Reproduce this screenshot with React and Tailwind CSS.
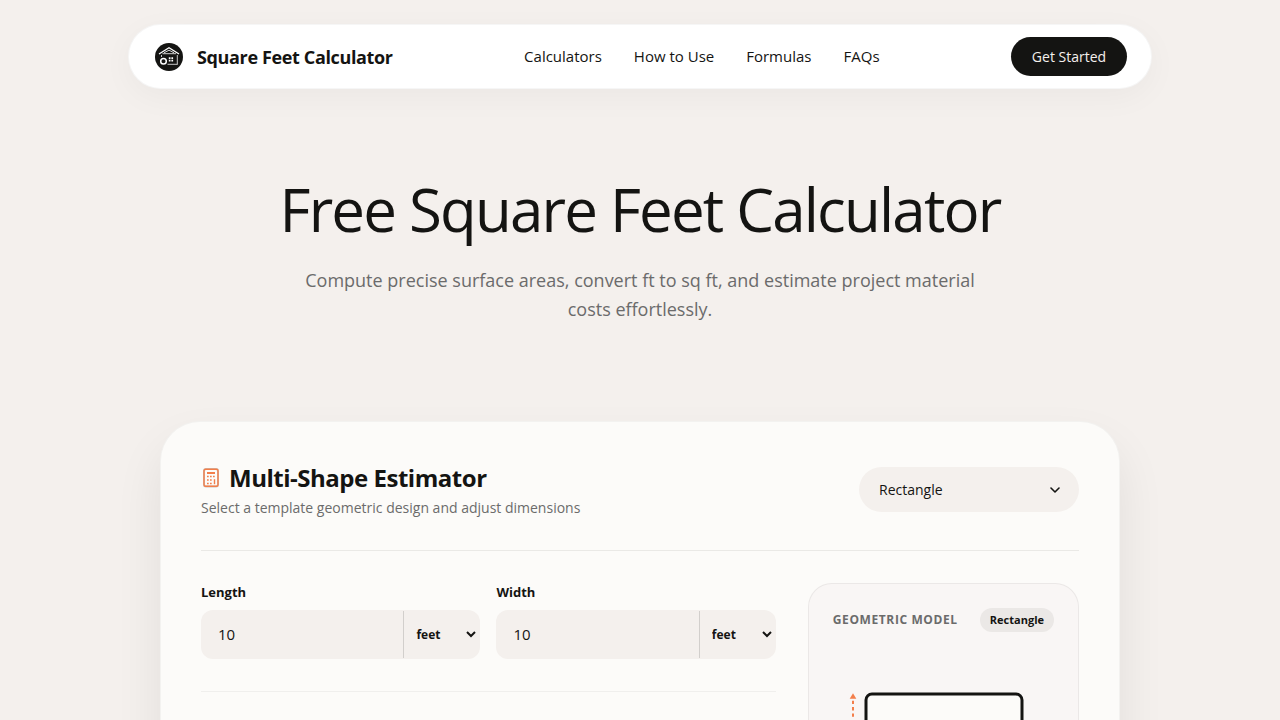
import { useState } from 'react';

const NAV_LINKS = ['Calculators', 'How to Use', 'Formulas', 'FAQs'];
const UNITS = ['feet', 'inches', 'yards', 'meters'];
const SHAPES = ['Rectangle', 'Circle', 'Triangle', 'Trapezoid'];

export default function App() {
  const [shape, setShape] = useState('Rectangle');

  return (
    <div className="h-screen overflow-hidden bg-[#f4f0ed] pt-6 font-['Open_Sans','Noto_Sans',sans-serif] text-[#141412]">
      <Navbar />

      {/* Hero */}
      <section className="mt-[86px] text-center">
        <h1 className="text-[60px] leading-[68px] tracking-[-1.8px]">Free Square Feet Calculator</h1>
        <p className="mx-auto mt-[23px] w-[700px] text-[18px] leading-[28.8px] text-[#6b6b6b]">
          Compute precise surface areas, convert ft to sq ft, and estimate project material costs effortlessly.
        </p>
      </section>

      {/* Calculator card */}
      <main className="mx-auto mt-[97px] h-[700px] w-[960px] rounded-[40px] border border-[#141412]/4 bg-[#fcfbf9] p-10 shadow-[0_24px_48px_rgba(20,20,19,0.08)]">
        <div className="flex h-[89px] items-start justify-between border-b border-[#141412]/8">
          <div>
            <h2 className="flex items-center gap-2 text-[24px] leading-[32px] font-bold tracking-[-0.48px]">
              <CalculatorIcon />
              Multi-Shape Estimator
            </h2>
            <p className="mt-[3px] text-[14px] leading-[22px] text-[#6b6b6b]">
              Select a template geometric design and adjust dimensions
            </p>
          </div>
          <div className="relative mt-[5px]">
            <select
              value={shape}
              onChange={e => setShape(e.target.value)}
              className="h-[45px] w-[220px] appearance-none rounded-full bg-[#f4f0ed] px-5 text-[14px]"
            >
              {SHAPES.map(s => <option key={s}>{s}</option>)}
            </select>
            <svg className="pointer-events-none absolute top-[18px] right-[19px]" width="10" height="10" viewBox="0 0 10 10" fill="none">
              <path d="M1 3 L5 7 L9 3" stroke="#141412" strokeWidth="1.6" strokeLinecap="round" strokeLinejoin="round" />
            </svg>
          </div>
        </div>

        <div className="mt-8 flex gap-8">
          <div className="flex-1">
            <div className="grid grid-cols-2 gap-4 border-b border-[#141412]/5 pb-8">
              <DimensionField label="Length" />
              <DimensionField label="Width" />
            </div>
          </div>
          <GeometricModel shape={shape} />
        </div>
      </main>
    </div>
  );
}

function Navbar() {
  return (
    <header className="mx-auto flex w-[1024px] items-center justify-between rounded-full border border-[#141412]/4 bg-white px-6 py-3 shadow-[0_8px_32px_rgba(20,20,19,0.04)]">
      <div className="flex items-center gap-3 text-[18px] font-bold tracking-[-0.36px]">
        <Logo />
        <span className="pt-px">Square Feet Calculator</span>
      </div>
      <nav className="flex gap-8 text-[15px]">
        {NAV_LINKS.map(link => <a key={link} href="#">{link}</a>)}
      </nav>
      <button type="button" className="h-[39px] w-[116px] rounded-full bg-[#141412] text-[14px] text-[#f4f0ed]">
        Get Started
      </button>
    </header>
  );
}

function DimensionField({ label }) {
  const [value, setValue] = useState('10');

  return (
    <label className="block">
      <span className="block h-[19px] text-[13px] leading-[19px] font-bold">{label}</span>
      <div className="mt-2 flex h-[49px] overflow-hidden rounded-xl bg-[#f4f0ed] p-px pl-0">
        <input
          value={value}
          onChange={e => setValue(e.target.value)}
          className="min-w-0 flex-1 pl-[17px] text-[15px] outline-none"
        />
        <select className="w-[76px] border-l border-[#141412]/15 pl-2 text-[12px] font-bold">
          {UNITS.map(u => <option key={u}>{u}</option>)}
        </select>
      </div>
    </label>
  );
}

function GeometricModel({ shape }) {
  return (
    <aside className="h-[340px] w-[271.2px] rounded-[24px] border border-[#141412]/6 bg-[#f9f6f5] p-6">
      <div className="flex items-center justify-between">
        <span className="text-[12px] font-bold tracking-[0.6px] text-[#6b6b6b]">GEOMETRIC MODEL</span>
        <span className="flex h-6 items-center rounded-full bg-[#ebe8e6] px-[10px] pt-px text-[11px] font-bold">{shape}</span>
      </div>
      <svg className="mt-8" width="221" height="180" viewBox="0 0 221 180" fill="none">
        <path d="M20 29.3 L23.3 34.8 H16.7 Z" fill="#f37e4a" />
        <path d="M20 36.7 V150" stroke="#f37e4a" strokeWidth="2" strokeDasharray="3.3 3.1" />
        <rect x="33" y="30" width="156" height="120" rx="6" fill="#fcfbf9" stroke="#141412" strokeWidth="3" />
      </svg>
    </aside>
  );
}

function Logo() {
  return (
    <svg width="32" height="32" viewBox="0 0 32 32" fill="none">
      <circle cx="16" cy="16" r="14" fill="#141412" />
      <g stroke="#fff">
        <path d="M6 13 L16 6.8 L26 13" strokeWidth="1.3" />
        <path d="M9.5 12.7 H23 M11 11.8 L16 9.2 L21 11.8" strokeWidth=".8" />
        <circle cx="10.5" cy="20.3" r="2.8" strokeWidth="1.5" />
        <path d="M8.5 14 V16 M14.5 23.3 H24.5 M24.3 14 V23.5" strokeWidth=".9" strokeOpacity=".85" />
      </g>
      <path d="M15.8 16.2 h1.7 v1.7 h-1.7z M18.4 16.2 h1.7 v1.7 h-1.7z M15.8 18.8 h1.7 v1.7 h-1.7z M18.4 18.8 h1.7 v1.7 h-1.7z" fill="#fff" />
    </svg>
  );
}

function CalculatorIcon() {
  return (
    <svg width="20" height="20" viewBox="0 0 20 20" fill="none">
      <rect x="3" y="1" width="14" height="17.5" rx="2" stroke="#9c9a98" strokeOpacity=".55" strokeWidth="2" />
      <rect x="3" y="1.3" width="14" height="17" rx="1.5" stroke="#f37e4a" strokeWidth="1.4" />
      <path d="M6 5 H14" stroke="#f37e4a" strokeWidth="2" />
      <path d="M6 8.5 H14 M6 12 H12 M6 15.5 H12" stroke="#f37e4a" strokeWidth="1.4" strokeDasharray="1.7 1.3" />
      <path d="M13.5 11.2 V16.2" stroke="#f37e4a" strokeWidth="1.4" />
    </svg>
  );
}
